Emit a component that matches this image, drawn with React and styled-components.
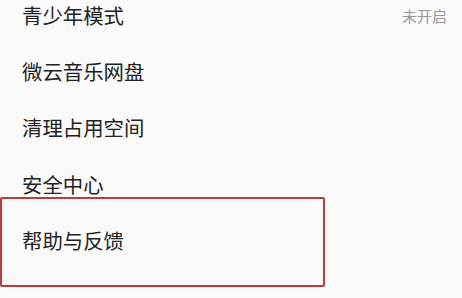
import styled, { createGlobalStyle } from "styled-components";

const SETTINGS = [
  { id: "teen", label: "青少年模式", value: "未开启" },
  { id: "cloud", label: "微云音乐网盘" },
  { id: "clean", label: "清理占用空间" },
  { id: "safe", label: "安全中心" },
  { id: "help", label: "帮助与反馈", highlighted: true }
];

const GlobalStyle = createGlobalStyle`
  html, body {
    margin: 0;
    padding: 0;
    background: #fafafa;
  }

  body {
    font-family: "Noto Sans CJK SC", "Noto Sans", sans-serif;
    overflow: hidden;
  }
`;

export default function App() {
  return (
    <>
      <GlobalStyle />
      <Page>
        <SettingsList>
          {SETTINGS.map((item) => (
            <SettingRow key={item.id}>
              <RowLabel>{item.label}</RowLabel>
              {item.value && <RowValue>{item.value}</RowValue>}
              {item.highlighted && <Highlight />}
            </SettingRow>
          ))}
        </SettingsList>
      </Page>
    </>
  );
}

const Page = styled.div`
  width: 462px;
  height: 298px;
  overflow: hidden;
  background: #fafafa;
`;

const SettingsList = styled.ul`
  list-style: none;
  margin: -13px 0 0;
  padding: 0;
  display: flex;
  flex-direction: column;
`;

const SettingRow = styled.li`
  position: relative;
  height: 56.25px;
  padding: 0 15px 0 22px;
  display: flex;
  align-items: center;
  justify-content: space-between;
`;

const RowLabel = styled.span`
  font-size: 20.4px;
  line-height: 1;
  color: #222;
`;

const RowValue = styled.span`
  font-size: 15px;
  line-height: 1;
  color: #999;
`;

/* annotation box drawn over the row */
const Highlight = styled.span`
  position: absolute;
  left: 0;
  top: -15.5px;
  width: 325px;
  height: 90px;
  box-sizing: border-box;
  border: 2px solid #c0393b;
  border-radius: 2px;
  pointer-events: none;
`;
